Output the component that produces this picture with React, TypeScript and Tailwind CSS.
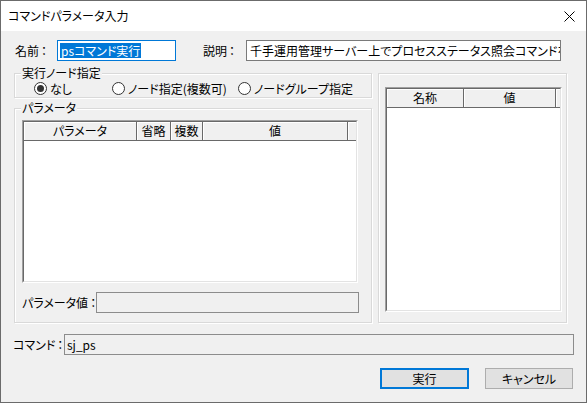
import React from 'react';

const font = "font-['Noto_Sans_CJK_JP','Noto_Sans',sans-serif] [font-feature-settings:'palt'] text-[12px] leading-none text-black";

function Label({ text, className }: { text: string; className?: string }) {
  return (
    <span className={`whitespace-nowrap ${className ?? ''}`}>
      {text}
      <span className="ml-[2px]">：</span>
    </span>
  );
}

function Radio({ label, checked }: { label: string; checked?: boolean }) {
  return (
    <div className="flex items-center gap-[3px]">
      <div className="w-[13px] h-[13px] rounded-full border border-[#333] bg-white flex items-center justify-center">
        {checked && <div className="w-[7px] h-[7px] rounded-full bg-[#333]" />}
      </div>
      <span>{label}</span>
    </div>
  );
}

function Group({ label, className, children }: { label: string; className?: string; children?: React.ReactNode }) {
  return (
    <div className={`relative border border-[#d9d9d9] shadow-[inset_1px_1px_0_#fff,1px_1px_0_#fff] ${className ?? ''}`}>
      {label && <span className="absolute left-[6px] -top-[7px] px-[1px] bg-[#f0f0f0]">{label}</span>}
      {children}
    </div>
  );
}

interface Col {
  title: string;
  width: number;
}

function ListView({ cols, className }: { cols: Col[]; className?: string }) {
  return (
    <div className={`border border-t-[#a0a0a0] border-l-[#a0a0a0] border-b-white border-r-white ${className ?? ''}`}>
      <div className="h-full flex flex-col border border-t-[#696969] border-l-[#696969] border-b-[#e3e3e3] border-r-[#e3e3e3] bg-white">
        <div className="flex h-[19px] bg-[#f0f0f0] shrink-0">
          {cols.map((c, i) => (
            <div
              key={i}
              style={{ width: c.width }}
              className="h-full flex items-center justify-center border-r border-b border-[#696969] shadow-[inset_1px_1px_0_#fff] shrink-0"
            >
              {c.title}
            </div>
          ))}
          <div className="flex-1 h-full border-b border-[#696969] shadow-[inset_1px_1px_0_#fff]" />
        </div>
        <div className="flex-1 bg-white" />
      </div>
    </div>
  );
}

export default function App() {
  return (
    <div className={`w-[587px] h-[403px] overflow-hidden bg-[#f0f0f0] ${font}`}>
      <div className="w-[587px] h-[403px] flex flex-col border border-[#6b6b6b]">
        {/* title bar */}
        <div className="h-[30px] bg-white flex items-center pl-[7px] pr-[11px] shrink-0">
          <span className="flex-1 text-[12px]">コマンドパラメータ入力</span>
          <svg width="11" height="11" viewBox="0 0 11 11" className="mt-[1px]">
            <path d="M0.5 0.5 L10.5 10.5 M10.5 0.5 L0.5 10.5" stroke="#000" strokeWidth="1" />
          </svg>
        </div>

        {/* name / description */}
        <div className="flex items-center mt-[9px] pl-[14px] h-[21px]">
          <Label text="名前" className="w-[42px]" />
          <div className="w-[119px] h-[21px] border border-[#0078d7] bg-white flex items-center pl-[2px]">
            <span className="bg-[#0078d7] text-white h-[15px] flex items-center px-[1px]">psコマンド実行</span>
          </div>
          <Label text="説明" className="ml-[27px] w-[43px]" />
          <div className="w-[315px] h-[21px] border border-[#7a7a7a] bg-white flex items-center pl-[3px] overflow-hidden whitespace-nowrap">
            千手運用管理サーバー上でプロセスステータス照会コマンドを
          </div>
        </div>

        {/* groups */}
        <div className="flex mt-[12px] pl-[13px] gap-[6px]">
          <div className="w-[358px] flex flex-col">
            <Group label="実行ノード指定" className="h-[25px]">
              <div className="flex items-center h-full pt-[6px] pl-[19px]">
                <div className="w-[78px]"><Radio label="なし" checked /></div>
                <div className="w-[126px]"><Radio label="ノード指定(複数可)" /></div>
                <Radio label="ノードグループ指定" />
              </div>
            </Group>
            <Group label="パラメータ" className="mt-[10px] h-[215px]">
              <div className="pl-[7px] pt-[11px] flex flex-col">
                <ListView
                  className="w-[336px] h-[163px]"
                  cols={[
                    { title: 'パラメータ', width: 113 },
                    { title: '省略', width: 34 },
                    { title: '複数', width: 32 },
                    { title: '値', width: 145 },
                  ]}
                />
                <div className="flex items-center mt-[9px] h-[21px]">
                  <Label text="パラメータ値" className="w-[74px]" />
                  <div className="w-[263px] h-[21px] border border-[#8c8c8c] bg-[#f0f0f0]" />
                </div>
              </div>
            </Group>
          </div>
          <Group label="" className="w-[189px] h-[250px]">
            <div className="pl-[6px] pt-[13px]">
              <ListView
                className="w-[177px] h-[225px]"
                cols={[
                  { title: '名称', width: 77 },
                  { title: '値', width: 92 },
                ]}
              />
            </div>
          </Group>
        </div>

        {/* command */}
        <div className="flex items-center mt-[11px] pl-[12px] h-[21px]">
          <Label text="コマンド" className="w-[51px]" />
          <div className="w-[510px] h-[21px] border border-[#8c8c8c] bg-[#f0f0f0] flex items-center pl-[2px]">
            sj_ps
          </div>
        </div>

        {/* buttons */}
        <div className="flex mt-[13px] pl-[379px] gap-[16px]">
          <button className="w-[89px] h-[21px] border-2 border-[#0078d7] bg-[#e1e1e1] flex items-center justify-center">
            実行
          </button>
          <button className="w-[88px] h-[21px] border border-[#adadad] bg-[#e1e1e1] flex items-center justify-center">
            キャンセル
          </button>
        </div>
      </div>
    </div>
  );
}
